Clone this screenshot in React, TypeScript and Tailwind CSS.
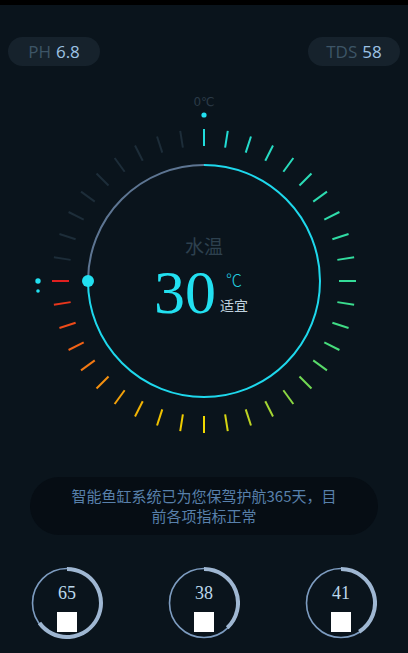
import React from "react";

const CX = 204;
const CY = 215;

type Stop = [number, [number, number, number]];
const stops: Stop[] = [
  [0, [32, 220, 220]],
  [30, [40, 220, 192]],
  [90, [52, 220, 152]],
  [120, [72, 220, 120]],
  [140, [128, 216, 72]],
  [160, [184, 212, 40]],
  [180, [240, 216, 0]],
  [200, [240, 192, 0]],
  [225, [244, 144, 16]],
  [250, [240, 80, 24]],
  [270, [224, 32, 32]],
];

function tickColor(a: number): string {
  if (a > 270) return "#1d2d39";
  for (let i = 0; i < stops.length - 1; i++) {
    const [a0, c0] = stops[i];
    const [a1, c1] = stops[i + 1];
    if (a >= a0 && a <= a1) {
      const t = (a - a0) / (a1 - a0);
      const c = c0.map((v, k) => Math.round(v + (c1[k] - v) * t));
      return `rgb(${c[0]},${c[1]},${c[2]})`;
    }
  }
  return "rgb(224,32,32)";
}

function pt(cx: number, cy: number, r: number, a: number) {
  const rad = (a * Math.PI) / 180;
  return [cx + r * Math.sin(rad), cy - r * Math.cos(rad)];
}

function Gauge() {
  const ticks = [];
  for (let i = 0; i < 40; i++) {
    const a = i * 9;
    const [x1, y1] = pt(CX, CY, 135, a);
    const [x2, y2] = pt(CX, CY, 152, a);
    ticks.push(
      <line key={i} x1={x1} y1={y1} x2={x2} y2={y2} stroke={tickColor(a)} strokeWidth={2} />
    );
  }
  const r = 116;
  return (
    <svg width={408} height={411} className="absolute left-0 top-0">
      {ticks}
      <path
        d={`M ${CX} ${CY - r} A ${r} ${r} 0 1 1 ${CX - r} ${CY}`}
        fill="none"
        stroke="#1ed8ec"
        strokeWidth={2}
      />
      <path
        d={`M ${CX - r} ${CY} A ${r} ${r} 0 0 1 ${CX} ${CY - r}`}
        fill="none"
        stroke="#5d7592"
        strokeWidth={2}
      />
      <circle cx={CX - r} cy={CY} r={6} fill="#22e0f0" />
      <circle cx={204} cy={49} r={2.6} fill="#22e0f0" />
      <circle cx={38} cy={215} r={2.7} fill="#22e0f0" />
      <circle cx={38} cy={225} r={1.8} fill="#22e0f0" />
    </svg>
  );
}

function Ring({ value }: { value: number }) {
  const c = 36;
  const r = 34.5;
  const ang = (value / 100) * 360;
  const [ex, ey] = pt(c, c, r - 0.5, ang);
  const large = ang > 180 ? 1 : 0;
  return (
    <div className="relative w-[72px] h-[72px]">
      <svg width={72} height={72} className="absolute left-0 top-0">
        <circle cx={c} cy={c} r={r} fill="none" stroke="#7d9cc0" strokeWidth={1.6} />
        <path
          d={`M ${c} ${c - r + 0.5} A ${r - 0.5} ${r - 0.5} 0 ${large} 1 ${ex} ${ey}`}
          fill="none"
          stroke="#9fb7d2"
          strokeWidth={4}
        />
      </svg>
      <div className="absolute left-0 right-0 top-[15px] text-center text-[18px] leading-[22px] text-[#bcd9ec] font-['Liberation_Serif',serif]">
        {value}
      </div>
      <div className="absolute left-[26px] top-[45px] w-[20px] h-[20px] bg-white" />
    </div>
  );
}

export default function App() {
  return (
    <div className="w-[408px] h-[653px] bg-[#0a141c] flex flex-col overflow-hidden font-['Open_Sans',sans-serif]">
      <div className="h-[5px] bg-black" />
      <div className="mt-[32px] px-[8px] flex justify-between">
        <div className="w-[92px] h-[29px] rounded-full bg-[#16222c] flex items-center justify-center gap-[5px] text-[17px] leading-none">
          <span className="text-[#3d5566]">PH</span>
          <span className="text-[#9dc2e4]">6.8</span>
        </div>
        <div className="w-[92px] h-[29px] rounded-full bg-[#16222c] flex items-center justify-center gap-[5px] text-[17px] leading-none">
          <span className="text-[#3d5566]">TDS</span>
          <span className="text-[#9dc2e4]">58</span>
        </div>
      </div>
      <div className="relative h-[411px]">
        <Gauge />
        <div className="absolute left-0 right-0 top-[30px] text-center text-[12px] leading-none text-[#2a3a47] font-['DejaVu_Sans',sans-serif]">
          0℃
        </div>
        <div className="absolute left-0 right-0 top-[170px] text-center text-[19px] leading-none text-[#2d404e] font-['Noto_Sans_CJK_SC',sans-serif]">
          水温
        </div>
        <div className="absolute left-[154px] top-[195px] text-[62px] leading-none text-[#22e0f0] font-['Liberation_Serif',serif]">
          30
        </div>
        <div className="absolute left-[226px] top-[205px] text-[16px] leading-none text-[#22d0e0] font-['Noto_Sans_CJK_SC',sans-serif] font-light">
          ℃
        </div>
        <div className="absolute left-[220px] top-[232px] text-[14px] leading-none text-[#c0d2de] font-['Noto_Sans_CJK_SC',sans-serif]">
          适宜
        </div>
      </div>
      <div className="mx-[30px] h-[58px] rounded-full bg-[#060d14] flex items-center justify-center text-center text-[15px] leading-[20px] text-[#5880ab] font-['Noto_Sans_CJK_SC',sans-serif]">
        <div>
          智能鱼缸系统已为您保驾护航365天，目
          <br />
          前各项指标正常
        </div>
      </div>
      <div className="mt-[32px] px-[31px] flex justify-between">
        <Ring value={65} />
        <Ring value={38} />
        <Ring value={41} />
      </div>
    </div>
  );
}
